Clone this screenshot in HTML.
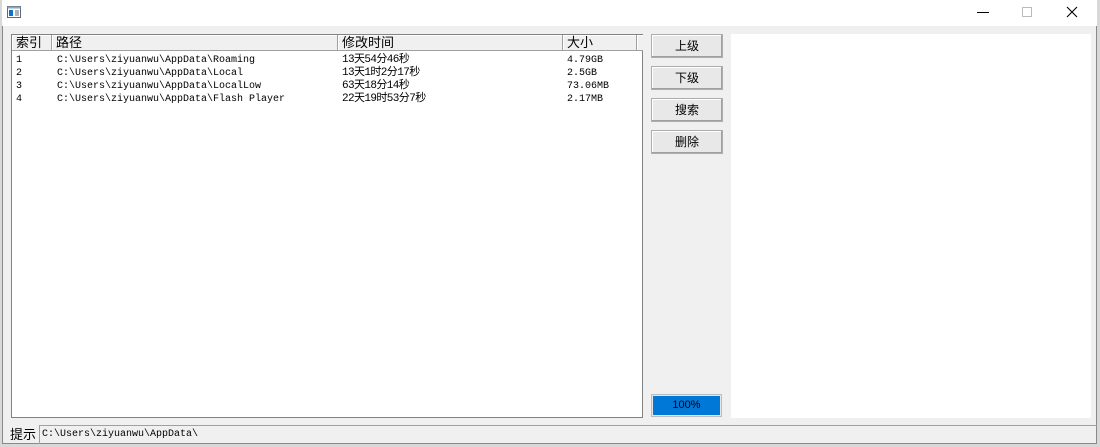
<!DOCTYPE html>
<html><head><meta charset="utf-8"><style>
body{margin:0;width:1100px;height:447px;background:#d8d8d8;position:relative;overflow:hidden;font-family:"Liberation Sans","Noto Sans CJK SC",sans-serif;}
.a{position:absolute;box-sizing:border-box}
.win{left:2px;top:0;width:1095px;height:444px;background:#f0f0f0;border:1px solid #8a8a8a;border-top:none}
.title{left:-1px;top:0;width:1095px;height:26px;background:#fff}
.mono{font-family:"Liberation Mono","Noto Sans CJK SC",monospace;font-size:10px;}
.hd{top:0;height:16px;border-right:1px solid #a0a0a0;border-bottom:1px solid #a0a0a0;background:#f0f0f0;font-size:13px;line-height:15px;padding-left:4px;color:#000;box-shadow:inset 1px 1px 0 #fff}
.btn{left:648px;width:72px;height:24px;background:#e8e8e8;border:1px solid #adadad;font-size:12px;line-height:22px;text-align:center;box-shadow:inset -1px -1px 0 #a0a0a0,inset 1px 1px 0 #fff}
.row{position:absolute;font-size:10px;line-height:13px;white-space:pre}
</style></head><body>
<div class="a win">
 <div class="a title">
  <svg class="a" style="left:5px;top:6px" width="14" height="12"><rect x="0.5" y="0.5" width="13" height="11" fill="#fff" stroke="#5a6a80"/><rect x="0.5" y="0.5" width="13" height="2" fill="#8aa"/><rect x="2" y="4" width="4" height="6" fill="#1070d0"/><line x1="8" y1="5" x2="12" y2="5" stroke="#666"/><line x1="8" y1="7" x2="12" y2="7" stroke="#666"/><line x1="8" y1="9" x2="12" y2="9" stroke="#666"/></svg>
  <div class="a" style="left:975px;top:12px;width:12px;height:1px;background:#000"></div>
  <div class="a" style="left:1020px;top:7px;width:10px;height:10px;border:1px solid #bbb"></div>
  <svg class="a" style="left:1064px;top:6px" width="12" height="12"><path d="M1 1L11 11M11 1L1 11" stroke="#000" stroke-width="1.1"/></svg>
 </div>
 <div class="a" style="left:8px;top:34px;width:632px;height:384px;background:#fff;border:1px solid #828282">
  <div class="a hd" style="left:0;width:40px">索引</div>
  <div class="a hd" style="left:40px;width:286px">路径</div>
  <div class="a hd" style="left:326px;width:225px">修改时间</div>
  <div class="a hd" style="left:551px;width:74px">大小</div>
  <div class="a hd" style="left:625px;width:6px;border-right:none"></div>
  <div class="mono">
  <div class="row" style="left:4px;top:19px">1
2
3
4</div>
  <div class="row" style="left:45px;top:19px">C:\Users\ziyuanwu\AppData\Roaming
C:\Users\ziyuanwu\AppData\Local
C:\Users\ziyuanwu\AppData\LocalLow
C:\Users\ziyuanwu\AppData\Flash Player</div>
  <div class="row" style="left:330px;top:19px;font-size:11px;letter-spacing:-0.6px">13天54分46秒
13天1时2分17秒
63天18分14秒
22天19时53分7秒</div>
  <div class="row" style="left:555px;top:19px">4.79GB
2.5GB
73.06MB
2.17MB</div>
  </div>
 </div>
 <div class="a btn" style="top:34px">上级</div>
 <div class="a btn" style="top:66px">下级</div>
 <div class="a btn" style="top:98px">搜索</div>
 <div class="a btn" style="top:130px">删除</div>
 <div class="a" style="left:728px;top:34px;width:360px;height:384px;background:#fff"></div>
 <div class="a" style="left:648px;top:394px;width:71px;height:23px;border:1px solid #bcbcbc;background:#0078d7;font-size:11px;line-height:21px;text-align:center;color:#000;box-shadow:inset 0 0 0 1px #e6e6e6">100%</div>
 <div class="a" style="left:7px;top:427px;font-size:13px;line-height:16px">提示</div>
 <div class="a mono" style="left:36px;top:425px;width:1058px;height:19px;border-top:1px solid #a0a0a0;border-left:1px solid #a0a0a0;line-height:18px;padding-left:2px">C:\Users\ziyuanwu\AppData\</div>
</div>
</body></html>
